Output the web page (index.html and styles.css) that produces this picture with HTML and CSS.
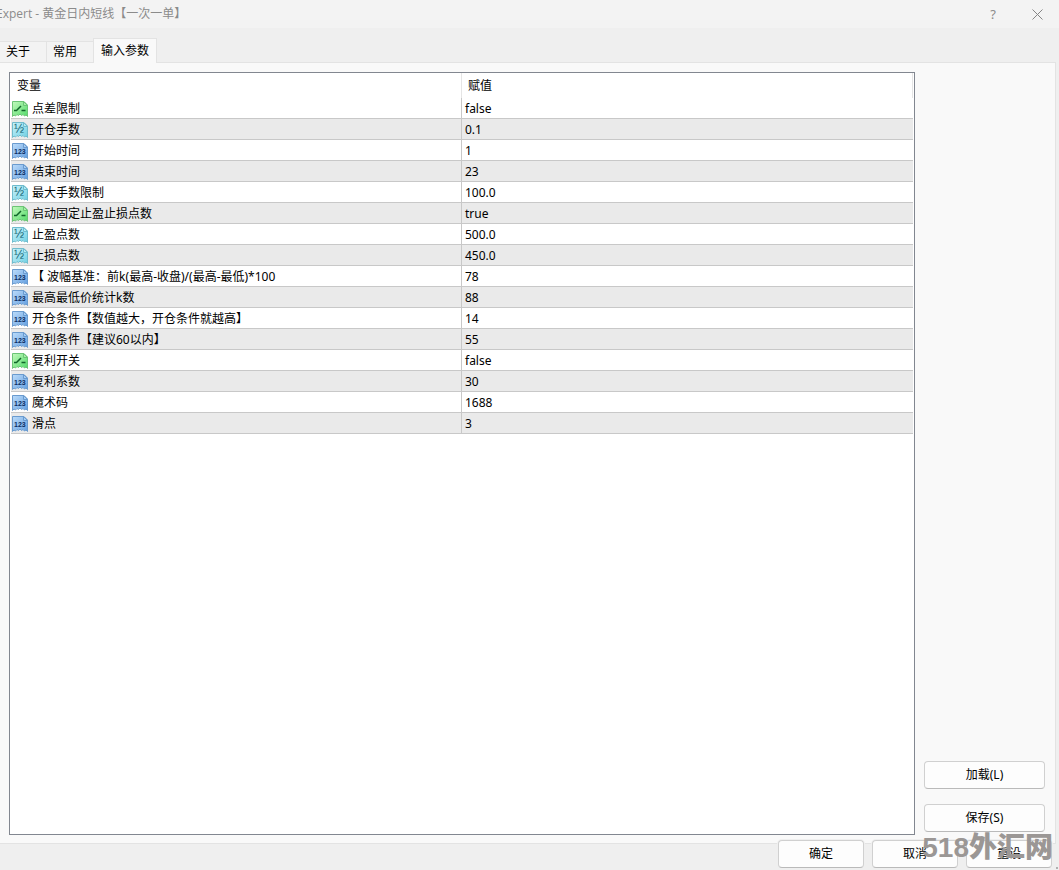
FILE: index.html
```html
<!DOCTYPE html>
<html lang="zh-CN">
  <head>
    <meta charset="UTF-8" />
    <meta name="viewport" content="width=device-width, initial-scale=1.0" />
    <title>Expert - 黄金日内短线【一次一单】</title>
    <link rel="stylesheet" href="styles.css">
  </head>
  <body>
    <!-- icon sprites: bool, double, int -->
    <svg class="sprites" aria-hidden="true">
      <defs>
        <linearGradient id="green" x1="0" y1="0" x2="1" y2="1">
          <stop offset="0" stop-color="#c3f9bd" />
          <stop offset="1" stop-color="#52db69" />
        </linearGradient>
        <linearGradient id="cyan" x1="0" y1="0" x2="1" y2="1">
          <stop offset="0" stop-color="#c9f3fb" />
          <stop offset="1" stop-color="#70cfe2" />
        </linearGradient>
        <linearGradient id="blue" x1="0" y1="0" x2="1" y2="1">
          <stop offset="0" stop-color="#bcdcfa" />
          <stop offset="1" stop-color="#649fe0" />
        </linearGradient>
        <path id="sheet" d="M.5 .5H12L15.500 4V15.500L14 14L12.500 15L11 13.500L9.500 14.500L8 13L6.500 14.500L5 13.500L3.500 15L2 14L.5 15.500Z" />
        <path id="fold" d="M11.500 .5V4.500H15.500Z" />
      </defs>
      <symbol id="icon-bool" viewBox="0 0 16 16">
        <use href="#sheet" fill="url(#green)" stroke="#6cc476" />
        <use href="#fold" fill="#a8f1a8" stroke="#6cc476" />
        <path d="M2 9.500H4.500L9 5M9.500 9.500H13.500" fill="none" stroke="#11662a" stroke-width="1.500" />
      </symbol>
      <symbol id="icon-double" viewBox="0 0 16 16">
        <use href="#sheet" fill="url(#cyan)" stroke="#70bccd" />
        <use href="#fold" fill="#b2ebf5" stroke="#70bccd" />
      </symbol>
      <symbol id="icon-int" viewBox="0 0 16 16">
        <use href="#sheet" fill="url(#blue)" stroke="#6a9bcf" />
        <use href="#fold" fill="#a5cdf5" stroke="#6a9bcf" />
      </symbol>
    </svg>

    <div class="dialog">
      <header class="titlebar">
        <h1>Expert - 黄金日内短线【一次一单】</h1>
        <button type="button" class="title-button" aria-label="帮助">?</button>
        <button type="button" class="title-button" aria-label="关闭">
          <svg width="11" height="11" viewBox="0 0 11 11"><path d="M.5 .5L10.500 10.500M10.500 .5L.5 10.500" stroke="#858585" /></svg>
        </button>
      </header>

      <nav class="tabs" role="tablist">
        <button type="button" class="tab" role="tab">关于</button>
        <button type="button" class="tab" role="tab">常用</button>
        <button type="button" class="tab active" role="tab" aria-selected="true">输入参数</button>
      </nav>

      <main class="panel">
        <div class="list">
          <table>
            <thead>
              <tr><th>变量</th><th>赋值</th></tr>
            </thead>
            <tbody>
              <tr><td><svg class="icon"><use href="#icon-bool" /></svg>点差限制</td><td>false</td></tr>
              <tr><td><svg class="icon double"><use href="#icon-double" /><text x="2" y="11">½</text></svg>开仓手数</td><td>0.1</td></tr>
              <tr><td><svg class="icon int"><use href="#icon-int" /><text x="2" y="11">123</text></svg>开始时间</td><td>1</td></tr>
              <tr><td><svg class="icon int"><use href="#icon-int" /><text x="2" y="11">123</text></svg>结束时间</td><td>23</td></tr>
              <tr><td><svg class="icon double"><use href="#icon-double" /><text x="2" y="11">½</text></svg>最大手数限制</td><td>100.0</td></tr>
              <tr><td><svg class="icon"><use href="#icon-bool" /></svg>启动固定止盈止损点数</td><td>true</td></tr>
              <tr><td><svg class="icon double"><use href="#icon-double" /><text x="2" y="11">½</text></svg>止盈点数</td><td>500.0</td></tr>
              <tr><td><svg class="icon double"><use href="#icon-double" /><text x="2" y="11">½</text></svg>止损点数</td><td>450.0</td></tr>
              <tr><td><svg class="icon int"><use href="#icon-int" /><text x="2" y="11">123</text></svg>【 波幅基准：前k(最高-收盘)/(最高-最低)*100</td><td>78</td></tr>
              <tr><td><svg class="icon int"><use href="#icon-int" /><text x="2" y="11">123</text></svg>最高最低价统计k数</td><td>88</td></tr>
              <tr><td><svg class="icon int"><use href="#icon-int" /><text x="2" y="11">123</text></svg>开仓条件【数值越大，开仓条件就越高】</td><td>14</td></tr>
              <tr><td><svg class="icon int"><use href="#icon-int" /><text x="2" y="11">123</text></svg>盈利条件【建议60以内】</td><td>55</td></tr>
              <tr><td><svg class="icon"><use href="#icon-bool" /></svg>复利开关</td><td>false</td></tr>
              <tr><td><svg class="icon int"><use href="#icon-int" /><text x="2" y="11">123</text></svg>复利系数</td><td>30</td></tr>
              <tr><td><svg class="icon int"><use href="#icon-int" /><text x="2" y="11">123</text></svg>魔术码</td><td>1688</td></tr>
              <tr><td><svg class="icon int"><use href="#icon-int" /><text x="2" y="11">123</text></svg>滑点</td><td>3</td></tr>
            </tbody>
          </table>
        </div>
        <div class="side">
          <button type="button" class="button">加载(L)</button>
          <button type="button" class="button">保存(S)</button>
        </div>
      </main>

      <footer class="footer">
        <button type="button" class="button">确定</button>
        <button type="button" class="button">取消</button>
        <button type="button" class="button">重设</button>
        <div class="watermark"><span>518</span>外汇网</div>
      </footer>
    </div>
  </body>
</html>
```

FILE: styles.css
```css
* {
  margin: 0;
  padding: 0;
  box-sizing: border-box;
}

body {
  font-family: "Noto Sans", "Noto Sans CJK SC", sans-serif;
  font-size: 12px;
  line-height: 18px;
  color: #000000;
  background: #efefef;
  overflow: hidden;
}

button {
  font: inherit;
  color: inherit;
}

.sprites {
  position: absolute;
  width: 0;
  height: 0;
}

.dialog {
  display: flex;
  flex-direction: column;
  height: 100vh;
}

/* title bar */
.titlebar {
  display: flex;
  align-items: center;
  height: 28px;
  background: #f3f3f3;
  color: #8b8b8b;
}

.titlebar h1 {
  flex: 1;
  margin-left: -4px;
  font-family: "Open Sans", "Noto Sans CJK SC", sans-serif;
  font-size: 12px;
  font-weight: normal;
}

.title-button {
  display: flex;
  align-items: center;
  justify-content: center;
  width: 44px;
  height: 26px;
  border: none;
  background: none;
  font-size: 13px;
}

/* tabs */
.tabs {
  display: flex;
  align-items: flex-end;
  height: 35px;
  padding-top: 10px;
  margin-bottom: -1px;
}

.tab {
  width: 47px;
  height: 22px;
  padding-right: 16px;
  border: 1px solid #e3e3e3;
  border-left: none;
  background: #f3f3f3;
  text-align: right;
}

.tab.active {
  width: 64px;
  height: 25px;
  margin-left: -1px;
  padding: 0 7px 1px;
  border-left: 1px solid #e3e3e3;
  border-bottom: none;
  background: #f9f9f9;
  text-align: center;
}

/* parameter list */
.panel {
  flex: 1;
  display: flex;
  gap: 9px;
  margin-right: 3px;
  padding: 9px 10px 8px 9px;
  background: #f9f9f9;
  border: 1px solid #e3e3e3;
  border-left: none;
}

.tabs + .panel {
  z-index: -1;
}

.list {
  flex: 1;
  padding: 0 1px;
  background: #ffffff;
  border: 1px solid #828790;
}

table {
  width: 100%;
  table-layout: fixed;
  border-collapse: separate;
  border-spacing: 0;
}

th {
  height: 25px;
  padding: 0 6px;
  border-right: 1px solid #e5e5e5;
  font-weight: normal;
  text-align: left;
}

td {
  height: 21px;
  padding: 2px 0 0 3px;
  border-bottom: 1px solid #c8c8c8;
  white-space: nowrap;
}

td:first-child {
  padding-left: 1px;
  border-right: 1px solid #c8c8c8;
}

tbody tr:nth-child(even) {
  background: #eaeaea;
}

.icon {
  width: 16px;
  height: 16px;
  margin: 1px 4px 0 0;
  vertical-align: top;
}

.icon text {
  font-family: "Liberation Sans", sans-serif;
  font-size: 7px;
}

.int text {
  font-weight: bold;
  fill: #0c2f63;
}

.double text {
  font-size: 12px;
  fill: #12606f;
}

/* buttons */
.button {
  height: 28px;
  background: #fdfdfd;
  border: 1px solid #d0d0d0;
  border-bottom-color: #bababa;
  border-radius: 4px;
}

.side {
  display: flex;
  flex-direction: column;
  justify-content: flex-end;
  gap: 15px;
  width: 121px;
  padding-bottom: 3px;
}

.footer {
  position: relative;
  display: flex;
  justify-content: flex-end;
  gap: 8px;
  margin-top: -4px;
  padding: 0 7px 2px;
}

.footer .button {
  width: 86px;
  box-shadow: 0 0 0 1px #efefef;
}

.footer::after {
  content: "";
  position: absolute;
  right: 1px;
  bottom: 1px;
  width: 2px;
  height: 2px;
  background: #b0b0b0;
}

.watermark {
  position: absolute;
  right: 6px;
  bottom: 2px;
  font-family: "Noto Sans CJK SC", sans-serif;
  font-size: 28px;
  font-weight: 900;
  line-height: 40px;
  color: #9b9795;
  pointer-events: none;
}

.watermark span {
  font-family: "Liberation Sans", sans-serif;
  font-weight: bold;
}
```
